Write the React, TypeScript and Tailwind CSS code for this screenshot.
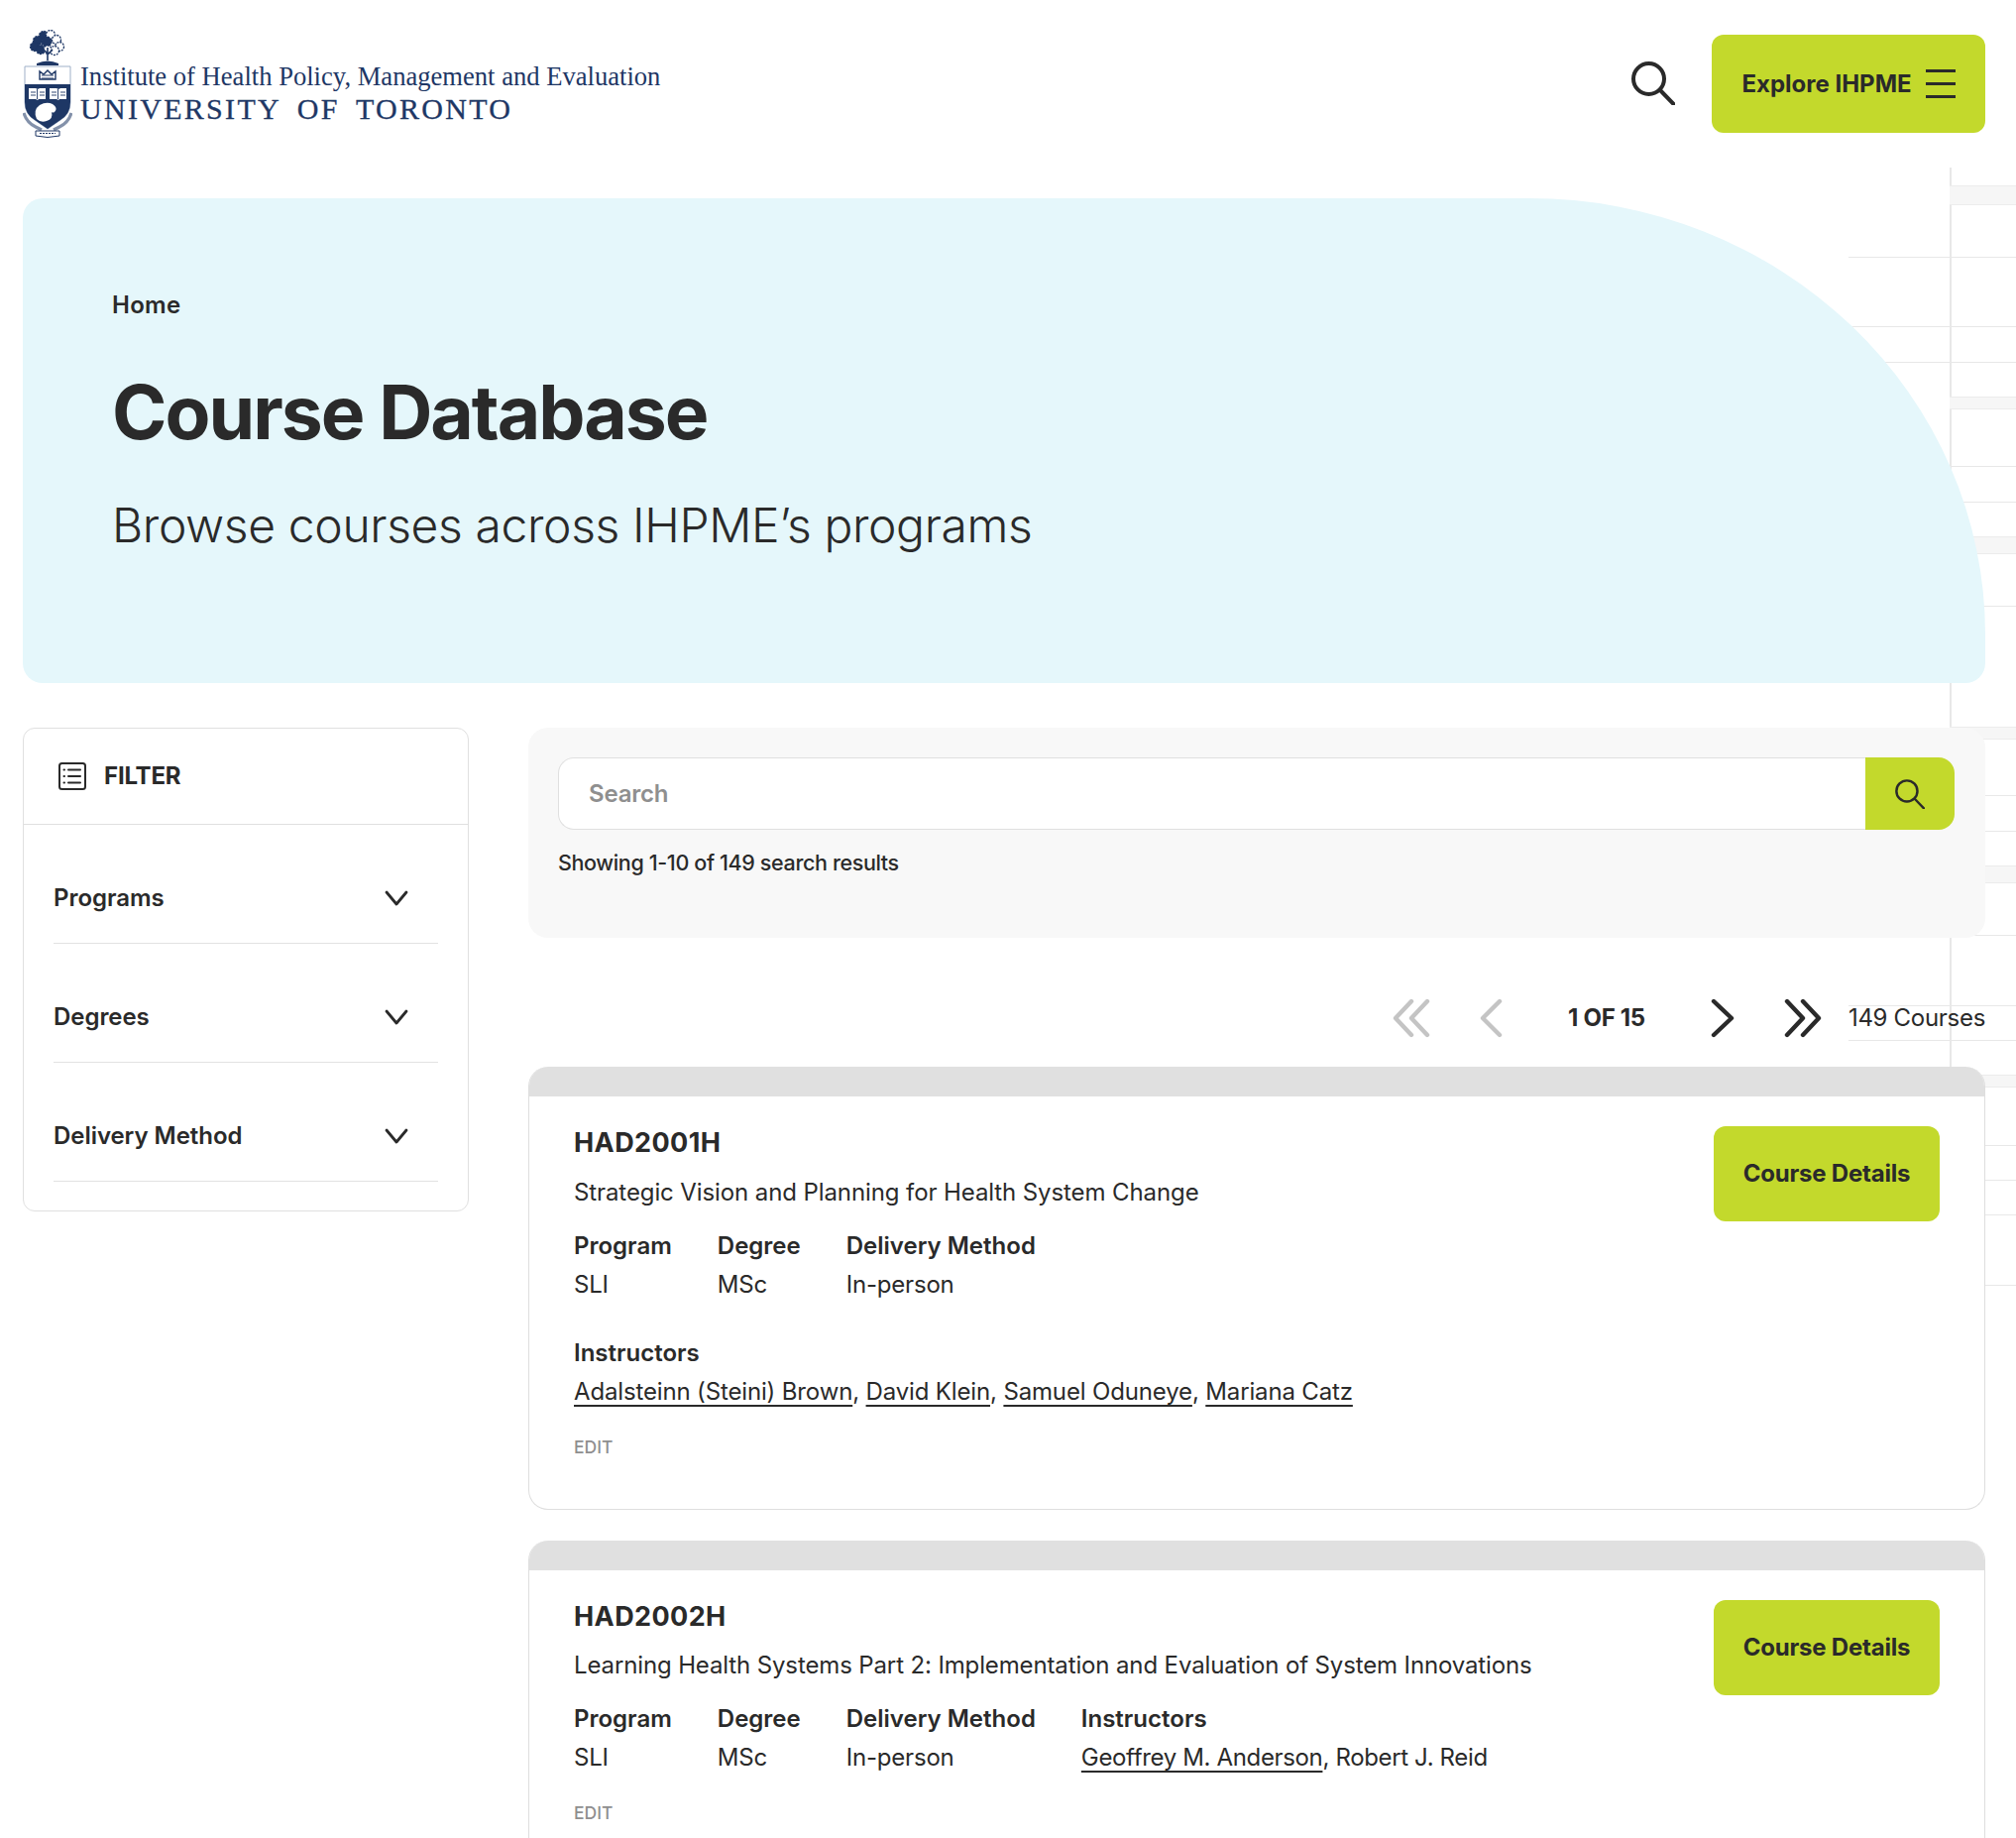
import React from "react";

const bgLines = [
  "top-[259px]", "top-[329px] h-[2px]", "top-[365px]", "top-[470px] h-[2px]", "top-[506px]", "top-[611px]",
  "top-[802px]", "top-[838px]", "top-[943px]", "top-[1014px]", "top-[1049px]", "top-[1155px]",
  "top-[1190px]", "top-[1225px]", "top-[1296px]",
];
const bgBands = [
  "top-[187px] h-[20px]", "top-[400px] h-[13px]", "top-[541px] h-[18px]", "top-[733px] h-[13px]",
  "top-[873px] h-[18px]", "top-[1084px] h-[13px]",
];

function Crest() {
  const navy = "#1e3765";
  const tree = [
    [18, 6, 4.5], [25, 5, 4.5], [12, 11, 4.5], [31, 10, 4.5], [9, 17, 4.5], [34, 17, 4.5], [15, 20, 4.5], [29, 21, 4.5], [21, 12, 5], [22, 20, 4],
  ];
  return (
    <svg width="50" height="110" viewBox="0 0 50 110" className="shrink-0">
      {tree.map(([x, y, r], i) => (
        <circle key={i} cx={x + 3} cy={y} r={r} fill={i % 2 ? "#fff" : navy} stroke={navy} strokeWidth="1.3" strokeDasharray="2 1" />
      ))}
      <path d="M25 18v13M25 24l-5-5M25 25l5-5" stroke={navy} strokeWidth="1.6" fill="none" />
      <path d="M14 34q11-5 22 0v2H14z" fill={navy} />
      <path d="M2 37h46v36q0 12-10 18l-13 9-13-9Q2 85 2 73z" fill="#fff" stroke="#9fb0c8" strokeWidth="1" />
      <path d="M2 55h46v18q0 12-10 18l-13 9-13-9Q2 85 2 73z" fill={navy} />
      <path d="M17 50v-8l4 3 4-4 4 4 4-3v8z" fill="#fff" stroke={navy} strokeWidth="1.4" />
      <path d="M19 46h12M19 49h12" stroke={navy} strokeWidth="1" />
      <path d="M6 59h7l2 1 2-1h6v11h-7l-1 1-2-1H6z" fill="#fff" />
      <path d="M27 59h7l2 1 2-1h6v11h-7l-1 1-2-1h-7z" fill="#fff" />
      <path d="M14.5 60v10M35.5 60v10M8 63h5M8 66h5M17 63h5M17 66h5M29 63h5M29 66h5M38 63h5M38 66h5" stroke={navy} strokeWidth="0.9" />
      <path d="M14 90q-4-9 3-14 7-4 13-1 6 4 2 8-2 1-3 0 2 7-5 9-6 2-10-2z" fill="#fff" />
      <path d="M1 84q3 10 12 14l6 3M49 84q-3 10-12 14l-6 3" stroke={navy} strokeWidth="3.2" fill="none" opacity="0.55" />
      <path d="M13 102h24v5q-12 3-24 0z" fill="#fff" stroke={navy} strokeWidth="1" />
      <path d="M17 104.5h16" stroke={navy} strokeWidth="1.2" strokeDasharray="2 1" />
    </svg>
  );
}

function SearchIcon({ size, stroke }: { size: number; stroke: number }) {
  return (
    <svg width={size} height={size} viewBox="0 0 44 44" fill="none" stroke="#2a2a2a" strokeWidth={stroke} strokeLinecap="round">
      <circle cx="17.5" cy="17.5" r="15.5" />
      <path d="M29 29l13.5 14" />
    </svg>
  );
}

function Chevron() {
  return (
    <svg width="24" height="16" viewBox="0 0 24 16" fill="none" stroke="#2a2a2a" strokeWidth="2.8" strokeLinecap="round" strokeLinejoin="round">
      <path d="M2 2l10 12L22 2" />
    </svg>
  );
}

function Pager({ d, w, c }: { d: string; w: number; c: string }) {
  return (
    <svg width={w} height="40" viewBox={`0 0 ${w} 40`} fill="none" stroke={c} strokeWidth="4.4" strokeLinecap="round" strokeLinejoin="round">
      <path d={d} />
    </svg>
  );
}

function FilterRow({ label }: { label: string }) {
  return (
    <div className="flex h-[120px] items-center justify-between border-b border-[#e2e2e2] pt-[28px] pr-[30px] text-[24px] font-semibold tracking-[-0.05px]">
      <span>{label}</span>
      <Chevron />
    </div>
  );
}

function Meta({ label, value, valueClass = "tracking-[-0.2px]" }: { label: string; value: React.ReactNode; valueClass?: string }) {
  return (
    <div className="flex flex-col">
      <span className="h-[39px] font-semibold tracking-normal">{label}</span>
      <span className={`h-[39px] ${valueClass}`}>{value}</span>
    </div>
  );
}

function Name({ children }: { children: React.ReactNode }) {
  return <span className="underline decoration-2 underline-offset-[5px]">{children}</span>;
}

function Details() {
  return (
    <button className="-mt-px flex h-[96px] w-[228px] shrink-0 items-center justify-center rounded-[12px] bg-[#c3d92c] text-[24px] font-bold tracking-[-0.2px]">
      Course Details
    </button>
  );
}

function Card({ code, title, children, h, edit, sub }: { code: string; title: string; children: React.ReactNode; h: string; edit: string; sub: string }) {
  return (
    <article className={`overflow-hidden rounded-[20px] border-x border-b border-[#dedede] bg-white ${h}`}>
      <div className="-mx-px h-[30px] bg-[#e0e0e0]" />
      <div className="flex items-start justify-between pl-[45px] pr-[45px] pt-[30.5px]">
        <div className="text-[24px] tracking-[-0.1px]">
          <h2 className="h-[36px] text-[27px] leading-[32px] font-bold tracking-[0.4px]">{code}</h2>
          <p className={`h-[34px] leading-[32px] ${sub}`}>{title}</p>
          {children}
          <p className={`text-[17.5px] font-medium tracking-normal text-[#8f8f8f] ${edit}`}>EDIT</p>
        </div>
        <Details />
      </div>
    </article>
  );
}

export default function App() {
  return (
    <div className="relative h-[1854px] overflow-hidden bg-white font-['Inter',sans-serif] text-[#2a2a2a]">
      <div className="absolute top-[169px] left-[1967px] h-[910px] w-[2px] bg-[#e8e8e8]" />
      {bgLines.map((c) => (
        <div key={c} className={`absolute left-[1865px] right-0 h-px bg-[#e8e8e8] ${c}`} />
      ))}
      {bgBands.map((c) => (
        <div key={c} className={`absolute left-[1967px] right-0 border-y border-[#ececec] bg-[#f6f6f6] ${c}`} />
      ))}

      <div className="relative z-10 pl-[23px] pr-[31px]">
        <header className="flex h-[200px] items-start justify-between">
          <div className="flex items-start pt-[30px]">
            <Crest />
            <div className="ml-[8px] mt-[31px] font-['Liberation_Serif',serif] text-[#1e3765]">
              <div className="text-[26.6px] leading-[32px] whitespace-nowrap">Institute of Health Policy, Management and Evaluation</div>
              <div className="text-[30px] leading-[34px] whitespace-nowrap tracking-[2.3px] [word-spacing:7px] [-webkit-text-stroke:0.3px_#1e3765]">UNIVERSITY OF TORONTO</div>
            </div>
          </div>
          <div className="flex items-start pt-[35px]">
            <div className="mt-[27px] mr-[37px]"><SearchIcon size={44} stroke={4} /></div>
            <button className="flex h-[99px] w-[276px] items-center justify-center gap-[14px] rounded-[12px] bg-[#c3d92c] text-[24px] font-bold tracking-normal">
              <span>Explore IHPME</span>
              <span className="flex w-[30px] flex-col gap-[10px]">
                <span className="h-[3px] bg-[#2a2a2a]" />
                <span className="h-[3px] bg-[#2a2a2a]" />
                <span className="h-[3px] bg-[#2a2a2a]" />
              </span>
            </button>
          </div>
        </header>

        <section className="h-[489px] rounded-[20px] rounded-tr-[460px_440px] bg-[#e5f7fb] pl-[90px] pt-[91px]">
          <div className="text-[24px] leading-[34px] font-semibold tracking-[0.3px]">Home</div>
          <h1 className="mt-[46px] text-[75px] leading-[90px] font-bold tracking-[-2px]">Course Database</h1>
          <p className="mt-[40px] text-[48px] leading-[58px] font-light tracking-[-0.37px]">Browse courses across IHPME’s programs</p>
        </section>

        <main className="mt-[45px] grid grid-cols-[450px_1470px] gap-[60px]">
          <aside className="h-[488px] rounded-[12px] border border-[#e0e0e0] bg-white">
            <div className="flex h-[97px] items-center gap-[17px] border-b border-[#e0e0e0] pl-[34px] text-[24px] font-bold tracking-[-0.2px]">
              <svg width="30" height="30" viewBox="0 0 30 30" fill="none" stroke="#2a2a2a" strokeWidth="2" strokeLinecap="round">
                <rect x="2" y="2" width="26" height="26" rx="2.5" />
                <path d="M11 8.5h12M11 15h12M11 21.5h12M6.5 8.5h.5M6.5 15h.5M6.5 21.5h.5" />
              </svg>
              <span>FILTER</span>
            </div>
            <div className="px-[30px]">
              <FilterRow label="Programs" />
              <FilterRow label="Degrees" />
              <FilterRow label="Delivery Method" />
            </div>
          </aside>

          <div>
            <div className="h-[212px] rounded-[20px] bg-[#f8f8f8] pl-[30px] pr-[31px] pt-[30px]">
              <div className="flex h-[73px]">
                <div className="flex flex-1 items-center rounded-l-[16px] border border-r-0 border-[#e0e0e0] bg-white pl-[30px] text-[24px] font-semibold tracking-[-0.2px] text-[#8f8f8f]">
                  Search
                </div>
                <div className="flex w-[90px] items-center justify-center rounded-r-[16px] bg-[#c3d92c]">
                  <SearchIcon size={30} stroke={3.6} />
                </div>
              </div>
              <p className="mt-[18px] text-[21.5px] leading-[30px] font-medium tracking-[-0.37px]">Showing 1-10 of 149 search results</p>
            </div>

            <nav className="flex h-[130px] items-center justify-end pt-[32px]">
              <Pager w={38} c="#c4c4c4" d="M19 3L3 20l16 17M35 3L19 20l16 17" />
              <div className="ml-[49px]"><Pager w={24} c="#c4c4c4" d="M21 3L4 20l17 17" /></div>
              <span className="ml-[66px] text-[24px] font-bold tracking-[-0.3px]">1 OF 15</span>
              <div className="ml-[66px]"><Pager w={24} c="#2a2a2a" d="M3 3l18 17L3 37" /></div>
              <div className="ml-[50px]"><Pager w={38} c="#2a2a2a" d="M3 3l16 17L3 37M19 3l16 17-16 17" /></div>
              <span className="ml-[27px] text-[24px] tracking-[-0.3px]">149 Courses</span>
            </nav>

            <div className="flex flex-col gap-[31px]">
              <Card code="HAD2001H" title="Strategic Vision and Planning for Health System Change" h="h-[447px]" edit="mt-[21px]" sub="mt-[14.5px]">
                <div className="mt-[19px] flex gap-[46px] leading-[34px]">
                  <Meta label="Program" value="SLI" />
                  <Meta label="Degree" value="MSc" />
                  <Meta label="Delivery Method" value="In-person" />
                </div>
                <div className="mt-[30px] leading-[34px]">
                  <div className="h-[39px] font-semibold tracking-normal">Instructors</div>
                  <div className="h-[39px] tracking-[-0.15px]">
                    <Name>Adalsteinn (Steini) Brown</Name>, <Name>David Klein</Name>, <Name>Samuel Oduneye</Name>, <Name>Mariana Catz</Name>
                  </div>
                </div>
              </Card>
              <Card code="HAD2002H" title="Learning Health Systems Part 2: Implementation and Evaluation of System Innovations" h="h-[320px]" edit="mt-[21px]" sub="mt-[13.5px] tracking-[-0.13px]">
                <div className="mt-[19px] flex gap-[46px] leading-[34px]">
                  <Meta label="Program" value="SLI" />
                  <Meta label="Degree" value="MSc" />
                  <Meta label="Delivery Method" value="In-person" />
                  <Meta label="Instructors" valueClass="tracking-[-0.35px]" value={<><Name>Geoffrey M. Anderson</Name>, Robert J. Reid</>} />
                </div>
              </Card>
            </div>
          </div>
        </main>
      </div>
    </div>
  );
}
